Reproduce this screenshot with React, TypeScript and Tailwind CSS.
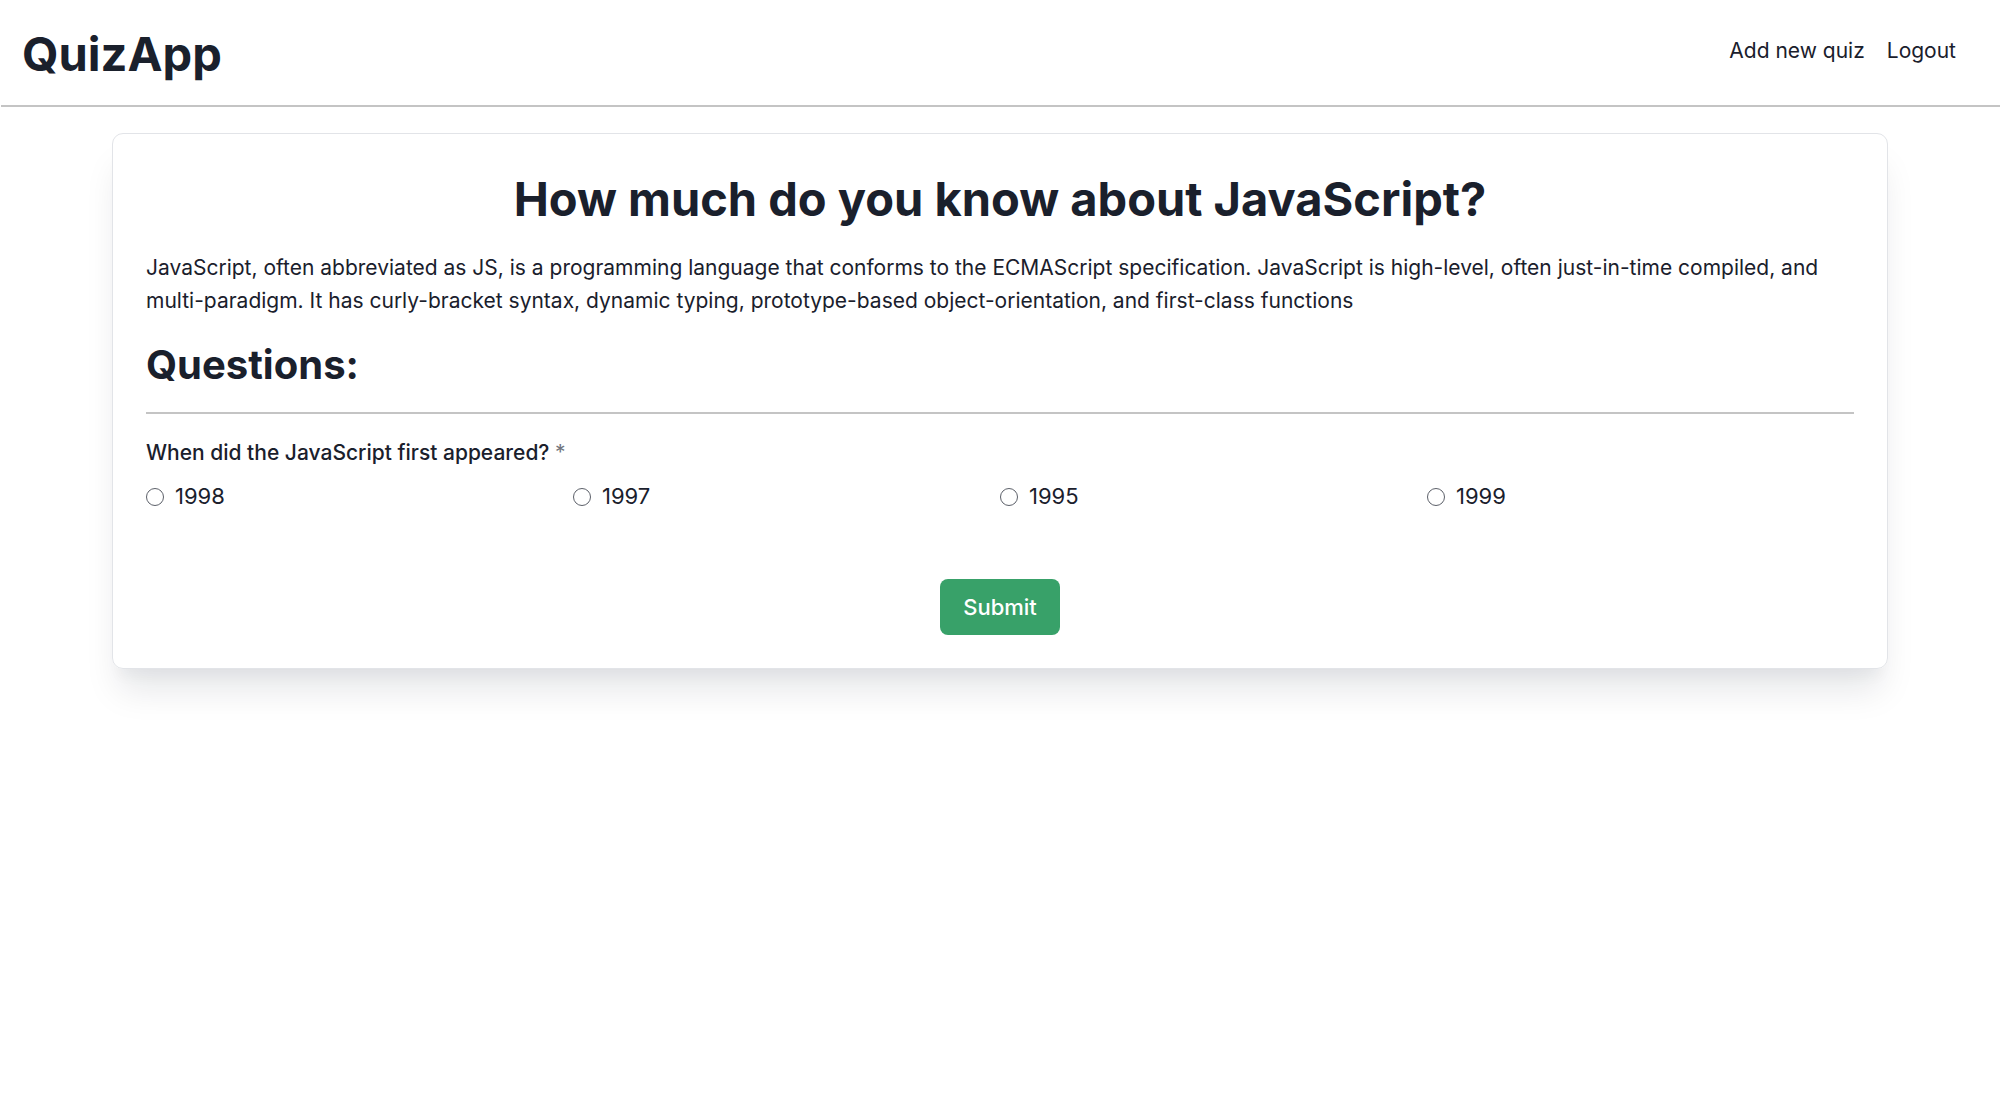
const options = ["1998", "1997", "1995", "1999"];

function Header() {
  return (
    <header className="ml-px flex items-start justify-between border-b-2 border-[#c4c4c4] pt-[21px] pr-11 pb-[19px] pl-[21px]">
      <h1 className="text-[47px] leading-[65px] font-bold">QuizApp</h1>
      <nav className="flex gap-[22px] pt-[13px] text-[21px] leading-[33px]">
        <a href="#new">Add new quiz</a>
        <a href="#logout">Logout</a>
      </nav>
    </header>
  );
}

function Option({ value }: { value: string }) {
  return (
    <label className="flex items-center gap-[11px]">
      <input
        type="radio"
        name="answer"
        value={value}
        className="size-[18px] appearance-none rounded-full border border-[#5c6069] bg-white checked:border-[6px] checked:border-[#3182ce]"
      />
      {value}
    </label>
  );
}

export default function App() {
  return (
    <div className="min-h-screen bg-white font-['Inter',sans-serif] text-[#1a202c]">
      <Header />
      <main className="mx-28 mt-[26px] rounded-[11px] border border-[#e2e4e8] px-[33px] pt-8 pb-[33px] shadow-[0_28px_35px_-7px_rgba(10,20,40,0.1),0_14px_14px_-7px_rgba(10,20,40,0.04)]">
        <h2 className="text-center text-[47px] leading-[66px] font-bold">
          How much do you know about JavaScript?
        </h2>
        <p className="mt-[19px] text-[21px] leading-[33px]">
          JavaScript, often abbreviated as JS, is a programming language that conforms to the ECMAScript
          specification. JavaScript is high-level, often just-in-time compiled, and multi-paradigm. It has
          curly-bracket syntax, dynamic typing, prototype-based object-orientation, and first-class functions
        </p>
        <h3 className="mt-[20px] text-[40px] leading-[56px] font-bold">Questions:</h3>
        <hr className="mt-[19px] border-t-2 border-[#c4c4c4]" />
        <form onSubmit={(event) => event.preventDefault()} className="mt-[22px] text-[22px] leading-[33px]">
          <fieldset>
            <legend className="text-[21px] font-medium">
              When did the JavaScript first appeared?{" "}
              <span className="font-normal text-[#71757e]">*</span>
            </legend>
            <div className="mt-[11px] grid grid-cols-4">
              {options.map((value) => (
                <Option key={value} value={value} />
              ))}
            </div>
          </fieldset>
          <div className="mt-[66px] flex justify-center">
            <button type="submit" className="h-14 rounded-lg bg-[#38a169] px-[23px] font-medium text-white">
              Submit
            </button>
          </div>
        </form>
      </main>
    </div>
  );
}
